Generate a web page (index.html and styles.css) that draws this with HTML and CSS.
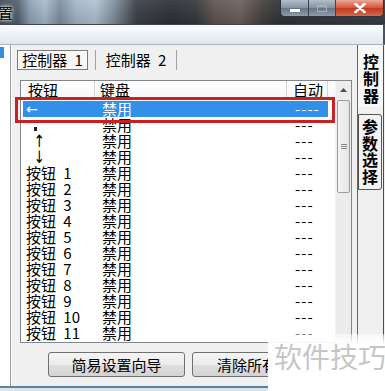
FILE: index.html
```html
<!DOCTYPE html>
<html>
<head>
    <title>控制器设置</title>
    <link rel="stylesheet" href="styles.css">
</head>
<body>

<div class="titlebar">
    <span class="title">置</span>
    <div class="caption">
        <span class="cap min"><i></i></span>
        <span class="cap max"><i></i></span>
        <span class="cap close">
            <svg width="12" height="10" viewBox="0 0 12 10"><path d="M1.5 1 L10.5 9 M10.5 1 L1.5 9" stroke="#fff" stroke-width="2.6" stroke-linecap="round"/></svg>
        </span>
    </div>
</div>
<div class="band"></div>

<div class="client">
    <div class="sidebar"><div class="side-item"></div></div>

    <div class="page">
        <div class="tabs">
            <span class="tab active">控制器 1</span>
            <span class="tab">控制器 2</span>
        </div>

        <div class="listview">
            <div class="list-body">
                <div class="header">
                    <span class="col c1">按钮</span>
                    <span class="col c2">键盘</span>
                    <span class="col c3">自动</span>
                    <span class="col c4"></span>
                </div>
                <div class="row selected"><span class="c1 arrow">←</span><span class="c2">禁用</span><span class="c3">----</span></div>
                <div class="row"><span class="c1"><b class="tick"></b></span><span class="c2">禁用</span><span class="c3">---</span></div>
                <div class="row"><span class="c1 arrow v">↑</span><span class="c2">禁用</span><span class="c3">---</span></div>
                <div class="row"><span class="c1 arrow v">↓</span><span class="c2">禁用</span><span class="c3">---</span></div>
                <div class="row"><span class="c1">按钮 1</span><span class="c2">禁用</span><span class="c3">---</span></div>
                <div class="row"><span class="c1">按钮 2</span><span class="c2">禁用</span><span class="c3">---</span></div>
                <div class="row"><span class="c1">按钮 3</span><span class="c2">禁用</span><span class="c3">---</span></div>
                <div class="row"><span class="c1">按钮 4</span><span class="c2">禁用</span><span class="c3">---</span></div>
                <div class="row"><span class="c1">按钮 5</span><span class="c2">禁用</span><span class="c3">---</span></div>
                <div class="row"><span class="c1">按钮 6</span><span class="c2">禁用</span><span class="c3">---</span></div>
                <div class="row"><span class="c1">按钮 7</span><span class="c2">禁用</span><span class="c3">---</span></div>
                <div class="row"><span class="c1">按钮 8</span><span class="c2">禁用</span><span class="c3">---</span></div>
                <div class="row"><span class="c1">按钮 9</span><span class="c2">禁用</span><span class="c3">---</span></div>
                <div class="row"><span class="c1">按钮 10</span><span class="c2">禁用</span><span class="c3">---</span></div>
                <div class="row"><span class="c1">按钮 11</span><span class="c2">禁用</span><span class="c3">---</span></div>
                <div class="row"><span class="c1">按钮 12</span><span class="c2">禁用</span><span class="c3">---</span></div>
            </div>
            <div class="scrollbar">
                <div class="sb-up">
                    <svg width="7" height="4" viewBox="0 0 7 4"><path d="M0 4 L3.5 0 L7 4 Z" fill="#4d4d4d"/></svg>
                </div>
                <div class="sb-thumb"><i></i><i></i><i></i></div>
            </div>
        </div>

        <div class="buttons">
            <span class="btn wide">简易设置向导</span>
            <span class="btn">清除所有设置</span>
        </div>
    </div>

    <div class="vtabs">
        <span class="vtab active">控制器</span>
        <span class="vtab">参数选择</span>
    </div>
</div>
<div class="frame-bottom"></div>

<div class="mark-box"></div>
<div class="watermark">软件技巧</div>

</body>
</html>
```

FILE: styles.css
```css
* { box-sizing: border-box; }
html, body { margin: 0; }
body { width: 385px; height: 391px; overflow: hidden; position: relative; background: #f0f0f0; font-family: "Noto Sans CJK SC", sans-serif; font-size: 15px; color: #000; word-spacing: 4px; }

/* title bar (blurred glass) */
.titlebar { height: 24px; display: flex; align-items: flex-start;
    background: linear-gradient(to bottom, rgba(255,255,255,0.08), rgba(0,0,0,0.12)),
        linear-gradient(to right, #3f4a55 0, #52606e 18px, #8ea3b7 30px, #a9bccc 45px, #7d8fa1 60px, #a4b8c9 76px, #b2c3d2 96px, #7b8997 116px, #3b4047 136px, #2c3035 170px, #34373b 195px, #5f5450 215px, #6d605b 240px, #45403f 262px, #2f3236 280px, #3a3f46 385px); }
.title { font-size: 15px; line-height: 16px; margin: 5px 0 0 -2px; text-shadow: 0 0 5px #fff, 0 0 3px #fff; }
.caption { margin-left: auto; margin-right: 1px; display: flex; height: 17px; border: 1px solid #2c343d; border-top: 0; border-radius: 0 0 5px 5px; overflow: hidden; }
.cap { height: 16px; display: flex; align-items: center; justify-content: center; }
.min, .max { width: 28px; border-right: 1px solid #3b4550; background: linear-gradient(#b4bec9, #8592a0 48%, #687684 52%, #8e9cab); }
.max { width: 27px; }
.min i { width: 10px; height: 3px; margin-top: 4px; background: #fff; box-shadow: 0 0 1px #333; }
.max i { width: 10px; height: 7px; border: 1px solid #a7b1bc; border-top-width: 2px; }
.close { width: 47px; background: linear-gradient(#eba796, #d65a41 46%, #c13a20 54%, #d86a4b); }

.band { height: 21px; border-top: 1px solid #3e4650; border-bottom: 1px solid #a9b3bf; border-right: 2px solid #4a525c; background: linear-gradient(#fbfcfe, #eff3f8 45%, #dfe6ef); }

/* client area */
.client { display: flex; height: 341px; }
.sidebar { width: 11px; background: #fff; border-right: 1px solid #9a9a9a; padding-top: 2px; }
.side-item { width: 4px; height: 11px; background: #3390e0; }

.page { width: 347px; border-left: 1px solid #fdfdfd; border-right: 1px solid #646464; display: flex; flex-direction: column; }

.tabs { display: flex; padding: 5px 0 0 5px; height: 25px; white-space: nowrap; }
.tab { height: 20px; line-height: 20px; text-align: center; border-left: 1px solid #a0a0a0; border-right: 1px solid #a0a0a0; width: 82px; margin-left: 7px; }
.tab.active { width: 71px; margin-left: 0; border: 1px solid #7a7a7a; background: #f7f7f7; box-shadow: inset 1px 1px 0 #fff; line-height: 18px; }

.listview { margin: 10px 0 0 8px; width: 332px; height: 263px; border: 1px solid #82878f; background: #fff; display: flex; overflow: hidden; }
.list-body { width: 314px; }
.header { display: flex; height: 19px; line-height: 18px; border-bottom: 1px solid #d5d5d5; background: linear-gradient(#fff, #f4f5f7); margin-bottom: 1px; }
.col { border-right: 1px solid #d5d5d5; }
.header .c1 { width: 74px; padding-left: 7px; }
.header .c2 { width: 192px; padding-left: 5px; }
.header .c3 { width: 41px; padding-left: 6px; }
.header .c4 { width: 7px; border-right: 0; }

.row { display: flex; height: 16px; line-height: 16px; margin-left: 2px; width: 305px; white-space: nowrap; }
.row .c1 { width: 72px; padding-left: 3px; }
.row .c2 { width: 192px; padding-left: 7px; }
.row .c3 { width: 41px; padding-left: 8px; letter-spacing: 1px; }
.row.selected { background: #3390e8; color: #fff; }
.arrow { font-family: "DejaVu Sans", sans-serif; font-size: 14px; }
.arrow.v { padding-left: 4px !important; font-size: 17px; transform: scaleX(0.8); }
.tick { display: inline-block; width: 3px; height: 4px; margin: 10px 0 0 8px; background: #222; vertical-align: top; }

.scrollbar { width: 16px; background: #ececec; border-left: 1px solid #f4f4f4; }
.sb-up { height: 17px; display: flex; align-items: center; justify-content: center; }
.sb-thumb { height: 93px; margin: 2px 1px 0 1px; border: 1px solid #9c9c9c; border-radius: 2px; background: linear-gradient(to right, #f3f3f3, #e4e4e4); display: flex; flex-direction: column; align-items: center; justify-content: center; gap: 1px; }
.sb-thumb i { width: 6px; height: 1px; background: #8a8a8a; }

.buttons { display: flex; gap: 7px; margin: 9px 0 0 36px; }
.btn { width: 140px; height: 25px; line-height: 23px; text-align: center; border: 1px solid #707070; border-radius: 3px; background: linear-gradient(#f4f4f4, #ececec 50%, #dfdfdf 51%, #d3d3d3); white-space: nowrap; word-spacing: 0; }
.btn.wide { width: 137px; }

/* vertical tabs on the right */
.vtabs { width: 26px; border-right: 1px solid #4c4c4c; display: flex; flex-direction: column; align-items: flex-start; }
.vtab { writing-mode: vertical-rl; text-orientation: upright; white-space: nowrap; font-weight: bold; font-size: 16px; letter-spacing: 0.5px; line-height: 22px; width: 24px; height: 76px; margin-top: 7px; padding-top: 4px; border: 1px solid #555; border-radius: 0 3px 3px 0; background: #f2f2f2; }
.vtab.active { width: 25px; height: 62px; margin-top: 0; padding-top: 9px; border: 0; background: #f7f7f7; line-height: 25px; letter-spacing: 1px; }

.frame-bottom { height: 5px; border-top: 2px solid #5f7fa8; background: #dbe3ec; width: 270px; }

/* annotation overlays */
.mark-box { position: absolute; left: 15px; top: 97px; width: 320px; height: 26px; border: 3px solid #c92023; }
.watermark { position: absolute; left: 268px; top: 334px; width: 117px; height: 57px; padding: 7px 0 0 6px; font-size: 28px; line-height: 30px; color: #c6c6c6; white-space: nowrap; word-spacing: 0; background: linear-gradient(rgba(255,255,255,0.5), #fff 10px); }
```
